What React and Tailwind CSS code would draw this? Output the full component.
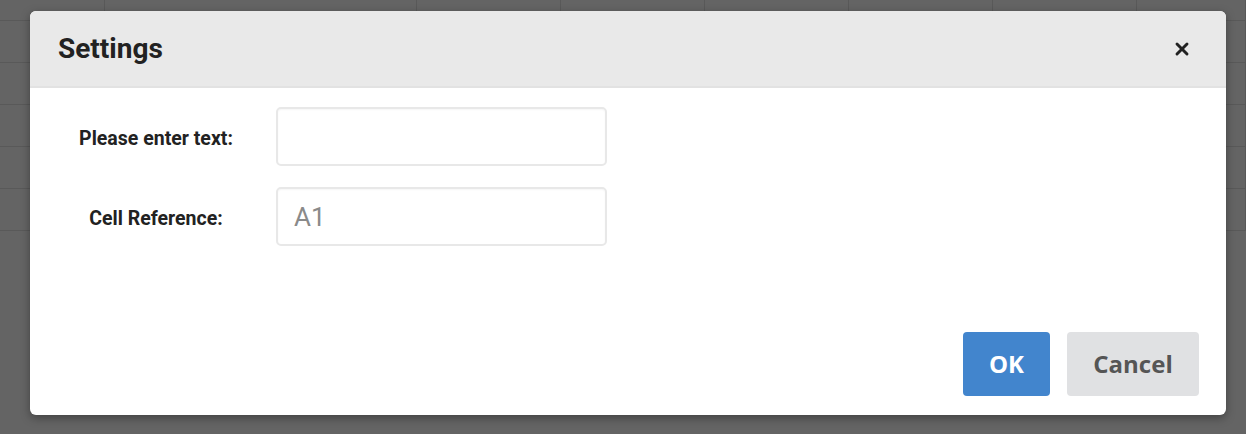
import { X } from 'lucide-react';

export default function App() {
    const cols = [105, 312, 144, 144, 144, 144, 144, 109];
    const rows = [0, 1, 2, 3, 4, 5];

    return (
        <div className="relative w-full h-[434px] overflow-hidden bg-[#646464] font-['Roboto',sans-serif]">
            {/* Spreadsheet behind the overlay */}
            <div className="-mt-[21px] flex flex-col">
                {rows.map((r) => (
                    <div key={r} className="flex h-[42px] border-b border-[#595959]">
                        {cols.map((w, i) => (
                            <div key={i} style={{ width: w }} className="shrink-0 border-r border-[#595959]"></div>
                        ))}
                    </div>
                ))}
            </div>

            {/* Dialog */}
            <div className="absolute left-[30px] top-[11px] w-[1196px] h-[404px] flex flex-col bg-white rounded-[6px] overflow-hidden shadow-[0_3px_10px_rgba(0,0,0,0.35)]">
                <div className="h-[77px] shrink-0 flex items-center justify-between pl-[28px] pr-[34px] bg-[#e9e9e9] border-b-2 border-[#e2e2e2]">
                    <h1 className="text-[28px] font-bold text-[#222] pt-[1px]">Settings</h1>
                    <X className="w-[20px] h-[20px] text-[#222]" strokeWidth={3.5} />
                </div>

                <div className="flex-1 flex flex-col gap-[21px] pt-[19px] pl-[28px]">
                    <div className="flex items-center">
                        <label className="w-[196px] text-center text-[19.5px] font-bold text-[#222] pt-[5px]">Please enter text:</label>
                        <div className="ml-[22px] w-[331px] h-[59px] rounded-[5px] border-2 border-[#e8e8e8] shadow-[inset_0_1px_2px_rgba(0,0,0,0.04)]"></div>
                    </div>
                    <div className="flex items-center">
                        <label className="w-[196px] text-center text-[19.5px] font-bold text-[#222] pt-[5px]">Cell Reference:</label>
                        <div className="ml-[22px] w-[331px] h-[59px] rounded-[5px] border-2 border-[#e8e8e8] shadow-[inset_0_1px_2px_rgba(0,0,0,0.04)] flex items-center pl-[16px] pt-[2px] text-[26px] text-[#8a8a8a]">A1</div>
                    </div>
                </div>

                <div className="flex justify-end gap-[17px] pr-[27px] pb-[19px] font-['Open_Sans',sans-serif]">
                    <button className="w-[87px] h-[64px] rounded-[4px] bg-[#4285cd] text-white text-[24px] font-bold">OK</button>
                    <button className="w-[132px] h-[64px] rounded-[4px] bg-[#e0e1e3] text-[#555] text-[24px] font-bold">Cancel</button>
                </div>
            </div>
        </div>
    );
}
